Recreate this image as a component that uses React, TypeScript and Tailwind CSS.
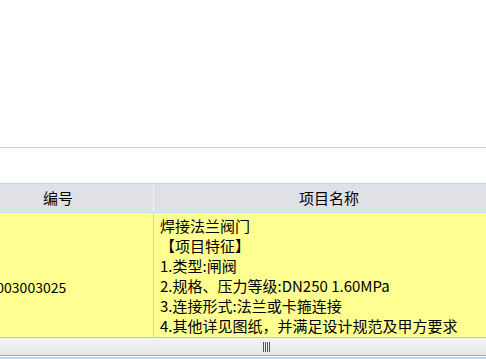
import React from 'react'

const font = { fontFamily: '"Noto Sans CJK SC", "Liberation Sans", sans-serif' }

const spec = [
  '焊接法兰阀门',
  '【项目特征】',
  '1.类型:闸阀',
  '2.规格、压力等级:DN250 1.60MPa',
  '3.连接形式:法兰或卡箍连接',
  '4.其他详见图纸，并满足设计规范及甲方要求',
]

export default function App() {
  return (
    <div
      className="w-[486px] h-[359px] overflow-hidden bg-white flex flex-col text-[15px] text-black"
      style={font}
    >
      {/* empty top panel */}
      <div className="h-[147px] shrink-0 bg-white" />
      <div className="h-px shrink-0 bg-[#b6d7f0]" />
      <div className="h-[35px] shrink-0 bg-white" />
      <div className="h-px shrink-0 bg-[#b6d7f0]" />

      {/* header */}
      <div className="h-[28px] shrink-0 flex bg-[#dfe1e6]">
        <div className="-ml-[37px] w-[190px] shrink-0 flex items-center justify-center">编号</div>
        <div className="w-px shrink-0 bg-[#eef0f4]" />
        <div className="w-[350px] shrink-0 flex items-center justify-center">项目名称</div>
      </div>
      <div className="h-px shrink-0 bg-[#c4dcf0]" />

      {/* data row */}
      <div className="h-[124px] shrink-0 flex bg-[#ffff91] overflow-hidden">
        <div className="-ml-[37px] w-[190px] shrink-0 pl-[10px] pt-[64px] leading-[20px] text-[14px]">
          031003003025
        </div>
        <div className="w-px shrink-0 bg-[#b9d6ee]" />
        <div className="flex-1 pl-[6px] pt-[3px] leading-[20px] whitespace-nowrap">
          {spec.map((line) => (
            <div key={line}>{line}</div>
          ))}
        </div>
      </div>

      {/* horizontal scrollbar */}
      <div className="h-[19px] shrink-0 flex flex-col">
        <div className="h-px bg-[#c2c2c2]" />
        <div className="flex-1 flex items-center justify-center pl-[46px] bg-gradient-to-b from-[#f4f4f4] to-[#e6e6e6]">
          <div className="flex gap-px h-[10px]">
            <div className="w-px bg-[#555]" />
            <div className="w-px bg-[#555]" />
            <div className="w-px bg-[#555]" />
            <div className="w-px bg-[#555]" />
          </div>
        </div>
        <div className="h-px bg-[#a9a9a9]" />
      </div>
      <div className="h-px shrink-0 bg-white" />
      <div className="flex-1 bg-[#b6d7f0]" />
    </div>
  )
}
